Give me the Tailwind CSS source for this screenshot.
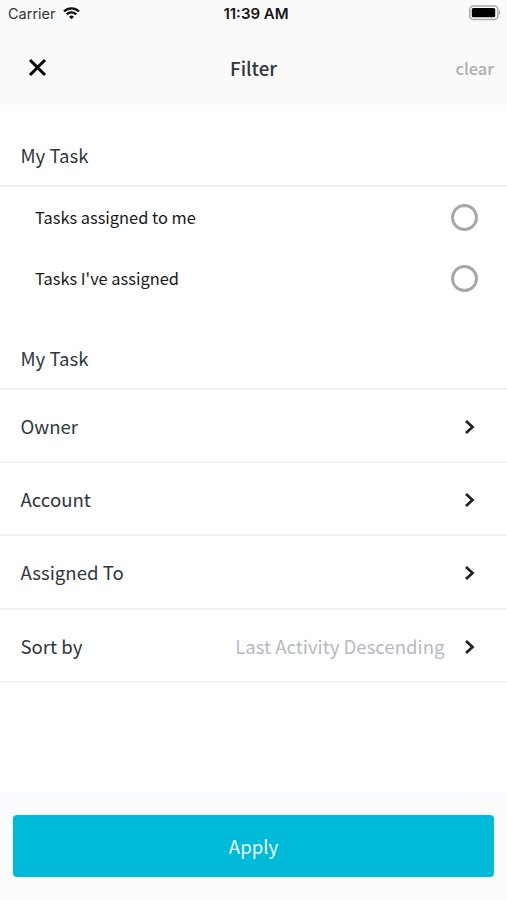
<!DOCTYPE html>
<html lang="en">
<head>
<meta charset="utf-8">
<title>Filter</title>
<script src="https://cdn.jsdelivr.net/npm/@tailwindcss/browser@4"></script>
</head>
<body class="w-[507px] h-[900px] overflow-hidden bg-white flex flex-col font-['Noto_Sans_CJK_SC','Noto_Sans',sans-serif] text-[#303740]">
  <header class="h-[105px] shrink-0 bg-[#fafafb]">
    <div class="h-[28px] grid grid-cols-[1fr_auto_1fr] items-center pl-[8px] pr-[6px] font-[Inter,sans-serif] leading-[20px]">
      <div class="flex items-center gap-[7px] text-[14.500px] text-[#333]">
        <span>Carrier</span>
        <svg class="mb-[2px] w-[17px] h-[13px]" viewBox="0 0 17 13" fill="none" stroke="#111" stroke-width="2.300"><path d="M1 4.500a10.600 10.600 0 0 1 15 0M3.700 7.400a6.800 6.800 0 0 1 9.600 0"/><path d="M8.500 12.300 6 9.700a3.600 3.600 0 0 1 5 0z" fill="#111" stroke="none"/></svg>
      </div>
      <div class="pl-[3px] text-[15px] font-semibold text-[#151515]">11:39 AM</div>
      <svg class="justify-self-end mb-[2px] w-[32px] h-[16px]" viewBox="0 0 32 16"><rect x=".8" y="1" width="28" height="13.400" rx="3.500" fill="#fff" stroke="#aaa" stroke-width="1.500"/><rect x="2.800" y="3" width="23.400" height="9.300" rx="1.500" fill="#000"/><path d="M30.200 5.300q1.800 2.400 0 4.800z" fill="#888"/></svg>
    </div>
    <div class="h-[77px] grid grid-cols-[1fr_auto_1fr] items-center pt-[3px] pl-[13px] pr-[13px]">
      <svg class="ml-[15px] mb-[2px] w-[19px] h-[19px]" viewBox="0 0 19 19" fill="none" stroke="#000" stroke-width="3"><path d="M2 2l15 15M17 2L2 17"/></svg>
      <span class="text-[18.700px] leading-[28px] font-medium">Filter</span>
      <span class="justify-self-end text-[16.400px] leading-[24px] font-medium text-[#acaeb0]">clear</span>
    </div>
  </header>
  <main class="flex-1">
    <h2 class="h-[82px] pt-[22px] border-b-2 border-[#efeff0] pl-[20.500px] text-[18.600px] leading-[56px] font-normal">My Task</h2>
    <div class="h-[61px] flex items-center justify-between pl-[35px] pr-[29.500px] text-[16.400px] text-[#181818]"><span>Tasks assigned to me</span><span class="size-[27px] rounded-full border-[3px] border-[#a8a8a8]"></span></div>
    <div class="h-[61px] flex items-center justify-between pl-[35px] pr-[29.500px] text-[16.400px] text-[#181818]"><span>Tasks I've assigned</span><span class="size-[27px] rounded-full border-[3px] border-[#a8a8a8]"></span></div>
    <h2 class="h-[81px] pt-[21px] border-b-2 border-[#efeff0] pl-[20.500px] text-[18.600px] leading-[56px] font-normal">My Task</h2>
    <div class="h-[73px] pt-[2px] flex items-center justify-between pl-[20.500px] pr-[32px] border-b-2 border-[#f2f2f3] text-[18.600px]"><span class="mb-[2px]">Owner</span><svg class="w-[11px] h-[16px]" viewBox="0 0 11 16" fill="none" stroke="#20252a" stroke-width="2.800"><path d="M2 2l6.500 6L2 14"/></svg></div>
    <div class="h-[73px] pt-[2px] flex items-center justify-between pl-[20.500px] pr-[32px] border-b-2 border-[#f2f2f3] text-[18.600px]"><span class="mb-[2px]">Account</span><svg class="w-[11px] h-[16px]" viewBox="0 0 11 16" fill="none" stroke="#20252a" stroke-width="2.800"><path d="M2 2l6.500 6L2 14"/></svg></div>
    <div class="h-[74px] pt-[2px] flex items-center justify-between pl-[20.500px] pr-[32px] border-b-2 border-[#f2f2f3] text-[18.600px]"><span class="mb-[2px]">Assigned To</span><svg class="w-[11px] h-[16px]" viewBox="0 0 11 16" fill="none" stroke="#20252a" stroke-width="2.800"><path d="M2 2l6.500 6L2 14"/></svg></div>
    <div class="h-[73px] pt-[2px] flex items-center pl-[20.500px] pr-[32px] border-b-2 border-[#f2f2f3] text-[18.600px]"><span class="mb-[2px]">Sort by</span><span class="ml-auto mr-[19.500px] mb-[2px] text-[#b5bac4]">Last Activity Descending</span><svg class="w-[11px] h-[16px]" viewBox="0 0 11 16" fill="none" stroke="#20252a" stroke-width="2.800"><path d="M2 2l6.500 6L2 14"/></svg></div>
  </main>
  <footer class="h-[108px] shrink-0 bg-[#f9fbfc] pt-[23px] px-[13px]">
    <button class="w-full h-[62px] rounded-[4px] bg-[#00bada] text-[18.600px] text-[#e9fbff]">Apply</button>
  </footer>
</body>
</html>
